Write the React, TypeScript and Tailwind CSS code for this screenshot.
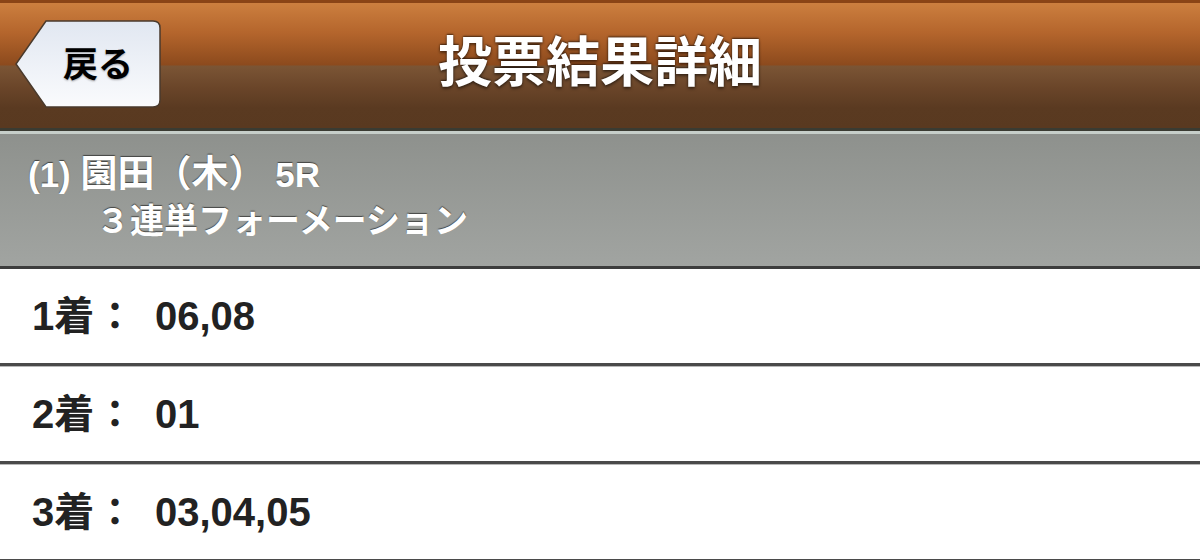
const font = { fontFamily: '"Liberation Sans", "Noto Sans CJK JP", sans-serif' };

function BackButton() {
  return (
    <button className="relative w-[146px] h-[88px] ml-[15px] -mt-[3px] shrink-0">
      <svg className="absolute inset-0" width="146" height="88" viewBox="0 0 146 88">
        <defs>
          <linearGradient id="bb" x1="0" y1="0" x2="0" y2="1">
            <stop offset="0" stopColor="#e1e7f1" />
            <stop offset="1" stopColor="#fafbfd" />
          </linearGradient>
        </defs>
        <path
          d="M31 1 H138 Q145 1 145 8 V80 Q145 87 138 87 H31 L1 44 Z"
          fill="url(#bb)"
          stroke="#4a3a2c"
          strokeWidth="1.5"
        />
      </svg>
      <span className="relative block pl-[20px] text-[35px] font-bold text-black leading-none [text-shadow:0_1px_2px_rgba(0,0,0,0.35)]">
        戻る
      </span>
    </button>
  );
}

const rows = [
  { label: '1着', value: '06,08' },
  { label: '2着', value: '01' },
  { label: '3着', value: '03,04,05' },
];

export default function App() {
  return (
    <div className="w-[1200px] h-[560px] overflow-hidden bg-white" style={font}>
      <div className="h-[3px] bg-[#8a4416]" />
      <header className="relative h-[125px] flex items-center bg-[linear-gradient(to_bottom,#cc7f3f_0px,#b4652c_30px,#8c4a1d_62px,#7b5535_63px,#6a4529_85px,#5a3a21_105px,#593920_125px)]">
        <BackButton />
        <h1 className="absolute inset-x-0 top-[33px] text-center text-[54px] font-bold text-white leading-none pointer-events-none [text-shadow:0_-1px_2px_rgba(0,0,0,0.6),0_2px_3px_rgba(0,0,0,0.5)]">
          投票結果詳細
        </h1>
      </header>
      <div className="h-[3px] bg-[#3a3b32]" />
      <div className="h-[3px] bg-[#c6cec9]" />
      <section className="h-[132px] px-[28px] pt-[18px] bg-[linear-gradient(to_bottom,#8e918d,#a1a4a1)] text-white font-bold [text-shadow:0_-1px_1px_rgba(0,0,0,0.55)]">
        <div className="text-[35px] leading-[46px]">
          (1) <span className="text-[37px]">園田（木）</span> 5R
        </div>
        <div className="text-[34px] leading-[46px] pl-[68px]">３連単フォーメーション</div>
      </section>
      <div className="h-[3px] bg-[#3d3d3d]" />
      {rows.map((r) => (
        <div key={r.label}>
          <div className="h-[94px] flex items-center pl-[32px] text-[40px] font-bold text-[#222] leading-none">
            <span className="w-[64px]">{r.label}</span>
            <span className="w-[59px] text-[38px]">：</span>
            <span>{r.value}</span>
          </div>
          <div className="h-[3px] bg-[#4a4a4a]" />
          <div className="h-[1px] bg-[#b8b8b8]" />
        </div>
      ))}
    </div>
  );
}
